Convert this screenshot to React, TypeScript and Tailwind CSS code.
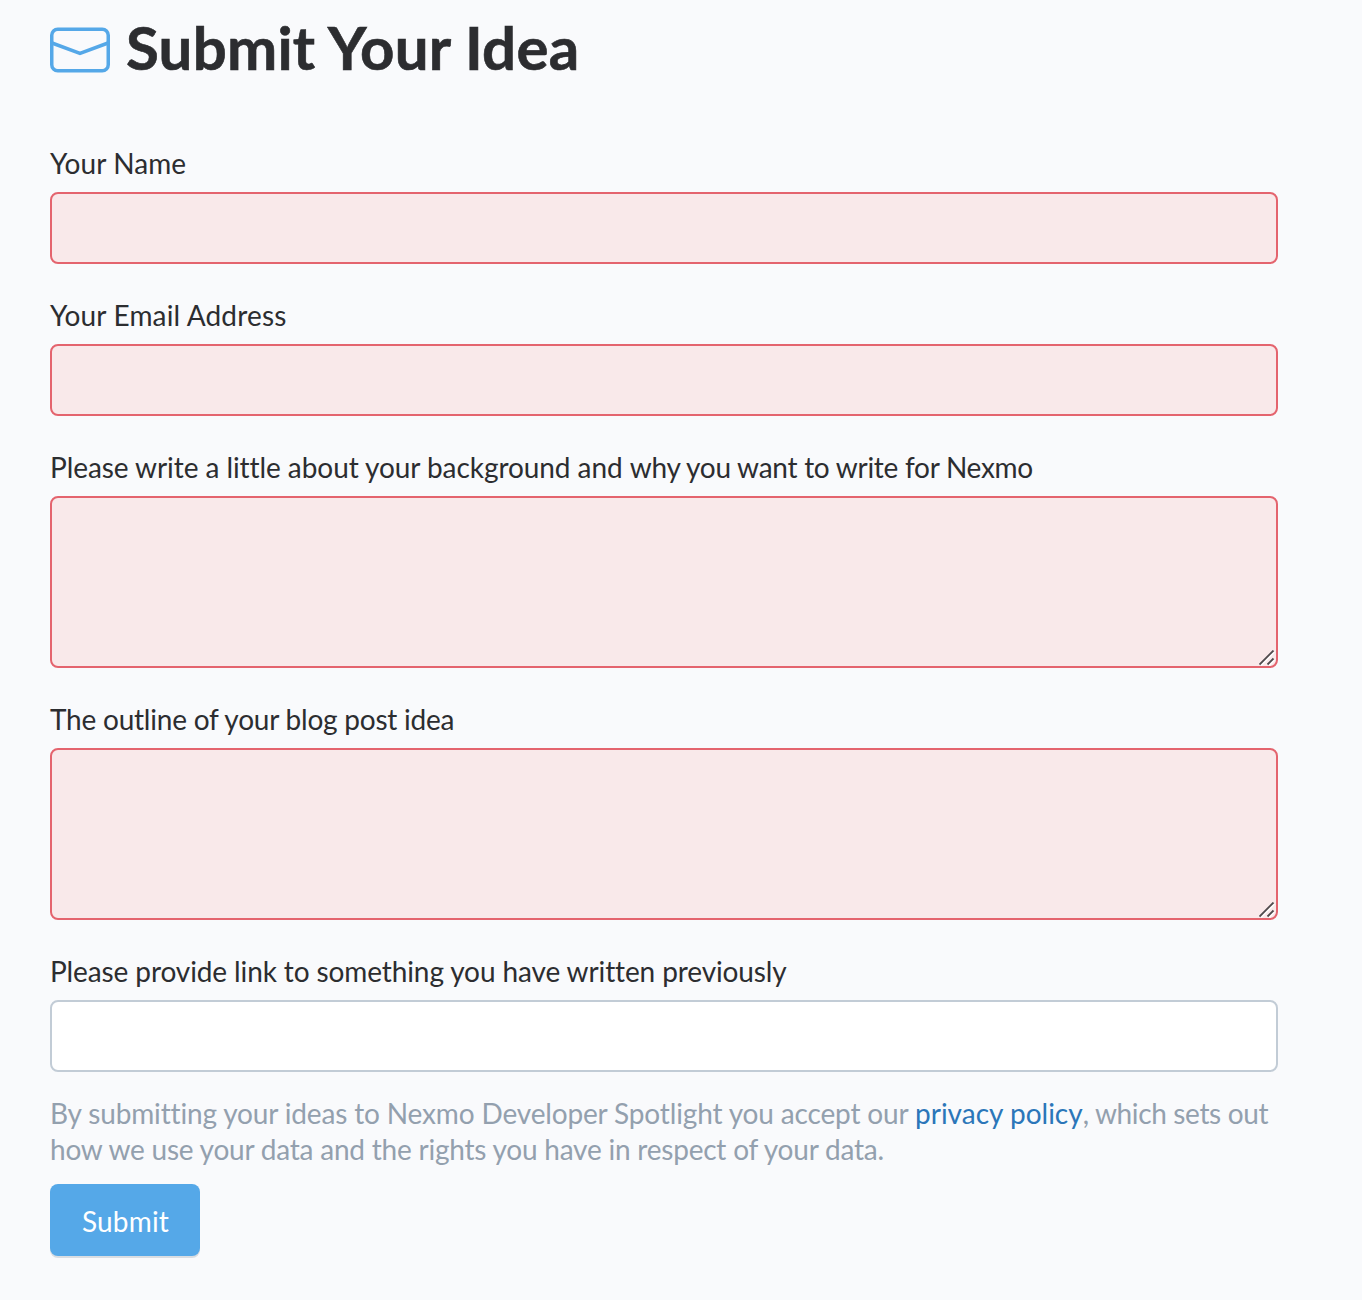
import React from "react";

interface FieldProps {
  label: React.ReactNode;
  multiline?: boolean;
  valid?: boolean;
}

function Field({ label, multiline = false, valid = false }: FieldProps) {
  const tone = valid ? "border-[#c2ccd6] bg-white" : "border-[#e4646e] bg-[#f9e9ea]";
  return (
    <label className="mb-9 block">
      <span className="mb-[13px] block leading-[31px] whitespace-nowrap">{label}</span>
      {multiline ? (
        <span className="relative block">
          <textarea className={`block h-[172px] w-full resize-none rounded-lg border-2 p-4 outline-none ${tone}`} />
          <svg className="absolute right-[3px] bottom-[2px] h-4 w-4" viewBox="0 0 16 16" fill="none">
            <path d="M2 15.5L15.5 2M10 15.5L15.5 10" stroke="#ffffff" strokeWidth="1.5" />
            <path d="M0.5 14.5L14.5 0.5M8.5 14.5L14.5 8.5" stroke="#4f4b4d" strokeWidth="1.8" />
          </svg>
        </span>
      ) : (
        <input className={`block h-[72px] w-full rounded-lg border-2 px-4 outline-none ${tone}`} />
      )}
    </label>
  );
}

export default function App() {
  return (
    <main className="h-[1300px] bg-[#f9fafc] pr-[84px] pl-[50px] font-['Lato',sans-serif] text-[28px] text-[#2c2d30] [font-variant-ligatures:none]">
      <h1 className="flex h-[100px] items-center gap-4 text-[60px] font-bold">
        <svg className="h-[46px] w-[60px]" viewBox="0 0 60 46" fill="none" stroke="#55a8e8" strokeWidth="3.5">
          <rect x="1.75" y="2.25" width="56.5" height="41.5" rx="6" />
          <path d="M2 16L30 26.5L58 16" />
        </svg>
        <span className="mb-[7px] tracking-[0.22px] [-webkit-text-stroke:0.6px_#2c2d30]">Submit Your Idea</span>
      </h1>
      <form className="pt-12" onSubmit={(e) => e.preventDefault()}>
        <Field label={<span className="tracking-[0.1px]">Your Name</span>} />
        <Field label={<span className="tracking-[0.16px]">Your Email Address</span>} />
        <Field
          label={
            <>
              <span className="tracking-[-0.07px]">Please write a little about your background and </span>
              <span className="tracking-[-0.27px]">why you want to write for Nexmo</span>
            </>
          }
          multiline
        />
        <Field label={<span className="tracking-[-0.22px]">The outline of your blog post idea</span>} multiline />
        <Field label={<span className="tracking-[-0.11px]">Please provide link to something you have written previously</span>} valid />
        <p className="-mt-[13px] mb-[17px] leading-9 whitespace-nowrap text-[#93a0ae]">
          <span className="tracking-[-0.15px]">By submitting your ideas to Nexmo Developer Spotlight you accept our </span>
          <a href="#" className="text-[#2b76b9]">privacy policy</a>
          <span className="tracking-[-0.35px]">, which sets out</span>
          <br />
          <span className="tracking-[-0.22px]">how we use your data and the rights you have in respect of your data.</span>
        </p>
        <button className="h-[72px] w-[150px] rounded-lg bg-[#55a8e8] pt-[2px] pl-px tracking-[0.15px] text-white shadow-[0_2px_0_#d9dde2]">Submit</button>
      </form>
    </main>
  );
}
